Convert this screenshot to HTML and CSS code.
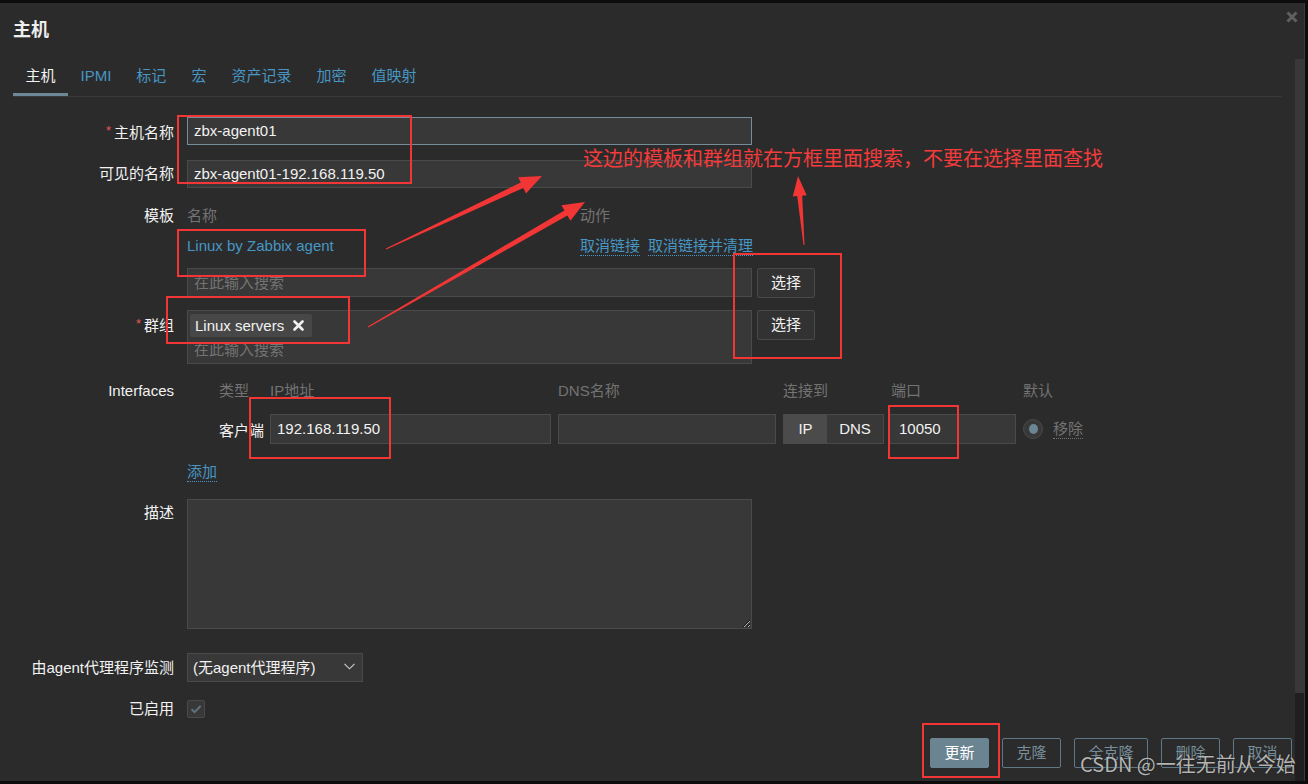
FILE: index.html
```html
<!DOCTYPE html>
<html lang="zh">
<head>
<meta charset="utf-8">
<title>主机</title>
<link rel="stylesheet" href="styles.css">
</head>
<body>
<div class="window">
  <div class="content">
    <div class="header"><h1 class="title">主机</h1></div>
    <ul class="tabs">
      <li class="tab active">主机</li>
      <li class="tab">IPMI</li>
      <li class="tab">标记</li>
      <li class="tab">宏</li>
      <li class="tab">资产记录</li>
      <li class="tab">加密</li>
      <li class="tab">值映射</li>
    </ul>

    <div class="form">
      <div class="row">
        <div class="label lh28"><span class="req">*</span>主机名称</div>
        <div class="field"><div class="input w565 h28 focus">zbx-agent01</div></div>
      </div>

      <div class="row mt15">
        <div class="label lh28">可见的名称</div>
        <div class="field"><div class="input w565 h28">zbx-agent01-192.168.119.50</div></div>
      </div>

      <div class="row mt18">
        <div class="label lh20">模板</div>
        <div class="field tpl-line">
          <span class="tpl-name muted">名称</span>
          <span class="muted">动作</span>
        </div>
      </div>

      <div class="row mt10">
        <div class="label lh20"></div>
        <div class="field tpl-line">
          <span class="tpl-name link">Linux by Zabbix agent</span>
          <span class="actions"><span class="dlink">取消链接</span><span class="dlink">取消链接并清理</span></span>
        </div>
      </div>

      <div class="row mt12">
        <div class="label lh28"></div>
        <div class="field ms">
          <div class="input w565 h29 placeholder">在此输入搜索</div>
          <div class="btn-grey">选择</div>
        </div>
      </div>

      <div class="row mt12">
        <div class="label lh28"><span class="req">*</span>群组</div>
        <div class="field ms">
          <div class="msbox">
            <div class="tag">Linux servers
              <svg class="tag-x" width="11" height="11" viewBox="0 0 11 11"><path d="M1.5 1.5 L9.5 9.5 M9.5 1.5 L1.5 9.5" stroke="#f0f0f0" stroke-width="2.6" stroke-linecap="round"/></svg>
            </div>
            <div class="ms-ph placeholder">在此输入搜索</div>
          </div>
          <div class="btn-grey">选择</div>
        </div>
      </div>

      <div class="row mt17">
        <div class="label lh20">Interfaces</div>
        <div class="field">
          <div class="iface">
            <div class="ih muted">类型</div>
            <div class="ih muted">IP地址</div>
            <div class="ih muted">DNS名称</div>
            <div class="ih muted">连接到</div>
            <div class="ih muted ih-port">端口</div>
            <div class="ih muted">默认</div>

            <div class="icell itype">客户端</div>
            <div class="icell"><div class="input w281 h30">192.168.119.50</div></div>
            <div class="icell"><div class="input w218 h30"></div></div>
            <div class="icell"><div class="toggle"><span class="tg on">IP</span><span class="tg">DNS</span></div></div>
            <div class="icell"><div class="input w128 h30 port">10050</div></div>
            <div class="icell idef"><span class="radio"><span class="dot"></span></span><span class="glink">移除</span></div>
          </div>
        </div>
      </div>

      <div class="row mt18">
        <div class="label lh20"></div>
        <div class="field"><span class="dlink add">添加</span></div>
      </div>

      <div class="row mt17">
        <div class="label lh28">描述</div>
        <div class="field"><textarea class="textarea"></textarea></div>
      </div>

      <div class="row mt24">
        <div class="label lh29">由agent代理程序监测</div>
        <div class="field">
          <div class="select">(无agent代理程序)
            <svg class="chev" width="11" height="7" viewBox="0 0 11 7"><path d="M0.5 0.8 L5.5 5.8 L10.5 0.8" fill="none" stroke="#cfcfcf" stroke-width="1.1"/></svg>
          </div>
        </div>
      </div>

      <div class="row mt18">
        <div class="label lh18">已启用</div>
        <div class="field">
          <div class="checkbox">
            <svg width="16" height="16" viewBox="0 0 16 16"><path d="M3.5 8.2 L6.6 11.2 L12.6 5" fill="none" stroke="#5d7381" stroke-width="2"/></svg>
          </div>
        </div>
      </div>
    </div>

    <div class="footer">
      <div class="btn primary">更新</div>
      <div class="btn">克隆</div>
      <div class="btn">全克隆</div>
      <div class="btn">删除</div>
      <div class="btn">取消</div>
    </div>
  </div>
  <div class="scrollbar"><div class="thumb"></div><div class="track"></div></div>
  <svg class="close" width="12" height="12" viewBox="0 0 12 12"><path d="M1.5 1.5 L10.5 10.5 M10.5 1.5 L1.5 10.5" stroke="#5f5f5f" stroke-width="3"/></svg>
</div>

<svg class="annot" width="1308" height="784" viewBox="0 0 1308 784">
  <g fill="none" stroke="#f23535" stroke-width="2">
    <rect x="178" y="116" width="233" height="67"/>
    <rect x="178" y="230" width="187" height="46"/>
    <rect x="167" y="297" width="182" height="46"/>
    <rect x="734" y="254" width="107" height="104"/>
    <rect x="250" y="398" width="140" height="60"/>
    <rect x="889" y="406" width="69" height="52"/>
    <rect x="923" y="724" width="76" height="53"/>
  </g>
  <g fill="#f23535">
    <polygon points="386.2,249.5 523.3,188.0 526.0,193.5 542,176 518.2,177.2 520.8,182.6 385.8,248.5"/>
    <polygon points="368.3,327.4 567.4,215.6 570.4,220.8 585,202 561.4,205.2 564.4,210.4 367.7,326.6"/>
    <polygon points="804.5,245.0 802.2,195.7 806.7,195.3 798,176 792.8,196.5 797.2,196.1 803.5,245.0"/>
  </g>
</svg>
<div class="note">这边的模板和群组就在方框里面搜索，不要在选择里面查找</div>
<div class="watermark">CSDN @一往无前从今始</div>
</body>
</html>
```

FILE: styles.css
```css
* { box-sizing: border-box; }
html, body { margin: 0; padding: 0; }
body {
  width: 1308px;
  height: 784px;
  background: #0c0c0c;
  font-family: "Liberation Sans", "Noto Sans CJK SC", sans-serif;
  font-size: 15px;
  color: #f2f2f2;
  overflow: hidden;
  position: relative;
}
.window {
  position: relative;
  margin-top: 3px;
  width: 1305px;
  height: 778px;
  background: #2b2b2b;
  display: flex;
  border-right: 1px solid #3a3a3a;
}
.content { width: 1295px; flex-shrink: 0; }
.scrollbar { width: 9px; display: flex; flex-direction: column; padding-top: 56px; }
.thumb { height: 634px; background: #383838; }
.track { flex: 1; background: #1f1f1f; }
.close { position: absolute; left: 1286px; top: 8px; }

.header { padding: 17px 13px 0; height: 37px; }
.title { margin: 0; font-size: 18px; font-weight: bold; line-height: 20px; height: 20px; color: #eeeeee; }

.tabs {
  list-style: none;
  margin: 16px 13px 0;
  padding: 0;
  display: flex;
  height: 41px;
  border-bottom: 1px solid #383838;
}
.tab {
  height: 40px;
  padding: 10px 12.5px 7px;
  line-height: 20px;
  border-bottom: 3px solid transparent;
  color: #4796c4;
}
.tab.active { color: #f2f2f2; border-bottom-color: #6e8796; }

.form { margin-top: 20px; }
.row { display: flex; align-items: flex-start; }
.mt10 { margin-top: 10px; }
.mt12 { margin-top: 12px; }
.mt15 { margin-top: 15px; }
.mt17 { margin-top: 17px; }
.mt18 { margin-top: 18px; }
.mt24 { margin-top: 24px; }

.label {
  width: 174px;
  flex-shrink: 0;
  text-align: right;
  margin-right: 13px;
  white-space: nowrap;
}
.lh18 { line-height: 18px; height: 18px; }
.lh20 { line-height: 20px; height: 20px; }
.lh28 { line-height: 28px; height: 28px; }
.lh29 { line-height: 29px; height: 29px; }
.req { color: #e45959; font-size: 13px; vertical-align: 3px; margin-right: 3px; }

.field { display: flex; align-items: flex-start; }

.input {
  background: #383838;
  border: 1px solid #4a4a4a;
  padding: 0 6px;
  color: #f2f2f2;
  white-space: nowrap;
  overflow: hidden;
}
.input.focus { border-color: #768d99; }
.input.port { padding-left: 10px; }
.w565 { width: 565px; }
.w281 { width: 281px; }
.w218 { width: 218px; }
.w128 { width: 128px; }
.h28 { height: 28px; line-height: 26px; }
.h29 { height: 29px; line-height: 27px; }
.h30 { height: 30px; line-height: 28px; }
.placeholder { color: #737373; }
.muted { color: #737373; }
.link { color: #4796c4; }

.tpl-line { line-height: 20px; height: 20px; }
.tpl-name { display: inline-block; width: 393px; height: 20px; }
.actions { display: flex; gap: 8px; height: 20px; }
.dlink {
  display: inline-block;
  height: 20px;
  color: #4796c4;
  line-height: 19px;
  border-bottom: 1px dotted #4796c4;
}

.ms { gap: 5px; }
.btn-grey {
  width: 58px;
  height: 30px;
  line-height: 28px;
  text-align: center;
  background: #323232;
  border: 1px solid #4a4a4a;
  border-radius: 2px;
  color: #f2f2f2;
}
.msbox {
  width: 565px;
  height: 54px;
  background: #383838;
  border: 1px solid #4a4a4a;
  padding: 3px 2px 0;
}
.tag {
  display: inline-flex;
  align-items: center;
  height: 23px;
  padding: 0 8px 0 5px;
  background: #474747;
  border-radius: 2px;
  color: #f2f2f2;
  line-height: 23px;
  vertical-align: top;
}
.tag-x { margin-left: 9px; }
.ms-ph { line-height: 20px; height: 20px; margin-top: 3px; padding-left: 4px; }

.iface {
  margin-left: 32px;
  display: grid;
  grid-template-columns: 51px 288px 225px 105px 135px 90px;
  grid-template-rows: 20px 30px;
  row-gap: 13px;
}
.ih { line-height: 20px; height: 20px; white-space: nowrap; }
.ih-port { padding-left: 3px; }
.icell { height: 30px; display: flex; align-items: center; }
.itype { white-space: nowrap; }
.toggle {
  display: flex;
  width: 101px;
  height: 30px;
  border: 1px solid #4a4a4a;
  background: #383838;
}
.tg { line-height: 28px; height: 28px; text-align: center; }
.tg.on { width: 43px; background: #4b4b4b; }
.tg:last-child { flex: 1; }
.idef { gap: 10px; }
.radio {
  width: 20px;
  height: 20px;
  border-radius: 50%;
  background: #383838;
  border: 1px solid #4a4a4a;
  display: flex;
  align-items: center;
  justify-content: center;
}
.dot { width: 9px; height: 10px; border-radius: 50%; background: #6c8593; }
.glink { color: #737373; height: 20px; line-height: 19px; border-bottom: 1px dotted #737373; }

.textarea {
  display: block;
  width: 565px;
  height: 130px;
  background: #383838;
  border: 1px solid #4a4a4a;
  margin: 0;
  resize: both;
  color: #f2f2f2;
  font: inherit;
}

.select {
  position: relative;
  width: 176px;
  height: 29px;
  line-height: 27px;
  padding: 0 5px;
  background: #383838;
  border: 1px solid #4a4a4a;
  white-space: nowrap;
}
.chev { position: absolute; right: 7px; top: 9px; }

.checkbox {
  width: 18px;
  height: 18px;
  background: #383838;
  border: 1px solid #4a4a4a;
  border-radius: 2px;
  display: flex;
  align-items: center;
  justify-content: center;
}

.footer {
  margin-top: 20px;
  padding-right: 3px;
  display: flex;
  justify-content: flex-end;
  gap: 13px;
}
.btn {
  height: 30px;
  line-height: 28px;
  padding: 0 13.5px;
  border: 1px solid #5f7886;
  border-radius: 2px;
  color: #768d99;
  white-space: nowrap;
}
.btn.primary { background: #6b8492; border-color: #6b8492; color: #ffffff; }

.annot { position: absolute; left: 0; top: 0; pointer-events: none; }
.note {
  position: absolute;
  left: 583px;
  top: 145px;
  font-family: "Noto Sans CJK SC", sans-serif;
  font-size: 20px;
  line-height: 26px;
  color: #f53b3b;
  white-space: nowrap;
}
.watermark {
  position: absolute;
  left: 1080px;
  top: 751px;
  font-family: "Noto Sans CJK SC", sans-serif;
  font-size: 20px;
  line-height: 26px;
  color: rgba(230, 230, 230, 0.78);
  text-shadow: 0 0 1px #000;
  white-space: nowrap;
}
```
